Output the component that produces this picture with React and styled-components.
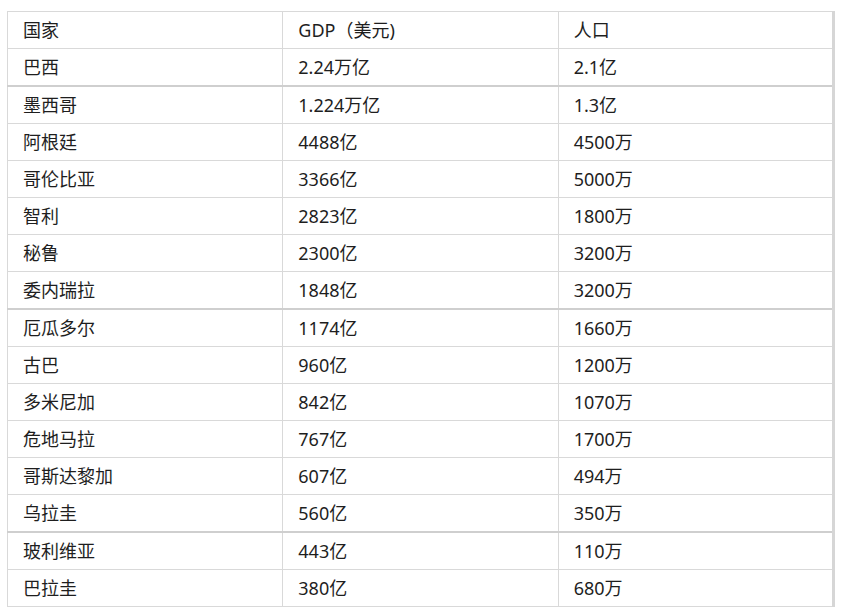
import React from "react";
import styled, { createGlobalStyle } from "styled-components";

const Global = createGlobalStyle`
  html, body { margin: 0; padding: 0; background: #ffffff; }
  body { font-family: "Noto Sans", "Noto Sans CJK SC", sans-serif; }
`;

const Page = styled.div`
  padding: 11px 0 0 7px;
`;

const Table = styled.table`
  border-collapse: collapse;
  width: 828px;
  table-layout: fixed;
  border-right: 3px solid #d6d6d6;
  color: #1e1e1e;
  font-size: 18px;
  font-family: "Noto Sans", "Noto Sans CJK SC", sans-serif;
`;

const Row = styled.tr`
  height: ${(p) => (p.$thick ? 38 : 37)}px;
  border-top: ${(p) => (p.$thick ? "2px solid #cfcfcf" : "1px solid #d9d9d9")};
`;

const Cell = styled.td`
  border-left: 1px solid #d9d9d9;
  border-bottom: 1px solid #d9d9d9;
  border-top: inherit;
  padding: 0 0 0 15px;
  vertical-align: middle;
  white-space: nowrap;
  line-height: 1;
`;

const rows = [
  ["国家", "GDP（美元)", "人口"],
  ["巴西", "2.24万亿", "2.1亿"],
  ["墨西哥", "1.224万亿", "1.3亿"],
  ["阿根廷", "4488亿", "4500万"],
  ["哥伦比亚", "3366亿", "5000万"],
  ["智利", "2823亿", "1800万"],
  ["秘鲁", "2300亿", "3200万"],
  ["委内瑞拉", "1848亿", "3200万"],
  ["厄瓜多尔", "1174亿", "1660万"],
  ["古巴", "960亿", "1200万"],
  ["多米尼加", "842亿", "1070万"],
  ["危地马拉", "767亿", "1700万"],
  ["哥斯达黎加", "607亿", "494万"],
  ["乌拉圭", "560亿", "350万"],
  ["玻利维亚", "443亿", "110万"],
  ["巴拉圭", "380亿", "680万"],
];

const thickRows = new Set([2, 8, 14]);

export default function App() {
  return (
    <Page>
      <Global />
      <Table>
        <tbody>
          {rows.map((r, i) => (
            <Row key={i} $thick={thickRows.has(i)}>
              {r.map((c, j) => (
                <Cell key={j}>{c}</Cell>
              ))}
            </Row>
          ))}
        </tbody>
      </Table>
    </Page>
  );
}
